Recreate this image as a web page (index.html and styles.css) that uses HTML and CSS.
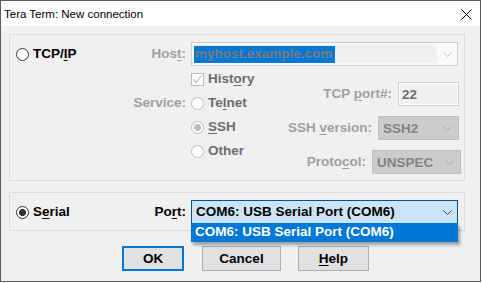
FILE: index.html
```html
<!DOCTYPE html>
<html>
<head>
<meta charset="utf-8">
<link rel="stylesheet" href="styles.css">
</head>
<body>
<div class="window">
  <div class="titlebar">
    <span class="title">Tera Term: New connection</span>
    <svg class="close" width="11" height="11" viewBox="0 0 11 11"><path d="M0.5 0.5 L10.5 10.5 M10.5 0.5 L0.5 10.5" stroke="#000" stroke-width="1" fill="none"/></svg>
  </div>
  <div class="body">
    <div class="group tcp">
      <div class="row">
        <div class="lead">
          <span class="opt"><span class="rb"></span><span>TCP/<u>I</u>P</span></span>
          <span class="lbl dis">Hos<u>t</u>:</span>
        </div>
        <div class="combo host">
          <div class="edit"><span class="sel">myhost.example.com</span></div>
          <span class="arrow"><svg width="9" height="5" viewBox="0 0 9 5"><path d="M0.5 0.5 L4.5 4.5 L8.5 0.5" stroke="#bdbdbd" fill="none"/></svg></span>
        </div>
      </div>
      <div class="lower">
        <div class="opts">
          <span></span>
          <span class="opt sub"><span class="cb"><svg width="11" height="11" viewBox="0 0 11 11"><path d="M1.5 5.5 L4 8.5 L9.5 1.5" stroke="#bcbcbc" stroke-width="1.2" fill="none"/></svg></span><span>Hist<u>o</u>ry</span></span>
          <span class="lbl dis">Service:</span>
          <span class="opt sub"><span class="rb d"></span><span>Te<u>l</u>net</span></span>
          <span></span>
          <span class="opt sub"><span class="rb d on"></span><span><u>S</u>SH</span></span>
          <span></span>
          <span class="opt sub"><span class="rb d"></span><span>Other</span></span>
        </div>
        <div class="fields">
          <div class="frow r6"><span class="lbl dis">TCP <u>p</u>ort#:</span><div class="field port">22</div></div>
          <div class="frow r6"><span class="lbl dis">SSH <u>v</u>ersion:</span><div class="dcombo ver"><span>SSH2</span><svg width="9" height="5" viewBox="0 0 9 5"><path d="M0.5 0.5 L4.5 4.5 L8.5 0.5" stroke="#a6a6a6" fill="none"/></svg></div></div>
          <div class="frow r4"><span class="lbl dis">Proto<u>c</u>ol:</span><div class="dcombo proto"><span>UNSPEC</span><svg width="9" height="5" viewBox="0 0 9 5"><path d="M0.5 0.5 L4.5 4.5 L8.5 0.5" stroke="#a6a6a6" fill="none"/></svg></div></div>
        </div>
      </div>
    </div>
    <div class="group serial">
      <div class="row">
        <div class="lead">
          <span class="opt"><span class="rb on"></span><span>S<u>e</u>rial</span></span>
          <span class="lbl">Po<u>r</u>t:</span>
        </div>
        <div class="combo portsel">
          <span class="val">COM6: USB Serial Port (COM6)</span>
          <span class="arrow"><svg width="9" height="5" viewBox="0 0 9 5"><path d="M0.5 0.5 L4.5 4.5 L8.5 0.5" stroke="#404040" fill="none"/></svg></span>
          <div class="dropdown">COM6: USB Serial Port (COM6)</div>
        </div>
      </div>
    </div>
    <div class="buttons">
      <button class="btn ok">OK</button>
      <button class="btn cancel">Cancel</button>
      <button class="btn help"><u>H</u>elp</button>
    </div>
  </div>
</div>
</body>
</html>
```
FILE: styles.css
```css
* { box-sizing: border-box; }
html, body { margin: 0; padding: 0; background: #ffffff; }
body { font-family: "Liberation Sans", Arial, sans-serif; font-weight: bold; font-size: 13.5px; color: #000; }
u { text-decoration: underline; text-underline-offset: 2px; text-decoration-thickness: 1px; }

.window {
  width: 481px; height: 282px;
  border: 1px solid #5c5c5c;
  display: flex; flex-direction: column;
  background: #f0f0f0;
}
.titlebar {
  height: 25px; background: #fff;
  display: flex; align-items: flex-start; justify-content: space-between;
  flex: none;
}
.title {
  font-weight: normal; font-size: 11.5px; line-height: 14px;
  margin-left: 3px; margin-top: 6px;
}
.close { margin-top: 8px; margin-right: 8px; }

.body { flex: 1; padding: 8px 0 0 8px; display: flex; flex-direction: column; }

.group { width: 456px; border: 1px solid #dcdcdc; flex: none; }
.tcp { height: 147px; }
.serial { height: 39px; margin-top: 11px; }

.row { display: flex; margin-top: 7px; height: 24px; }
.lead { width: 181px; display: flex; align-items: center; justify-content: space-between; padding-left: 6px; padding-right: 5px; }
.lbl { line-height: 16px; }
.dis { color: #a0a0a0; }

.opt { display: flex; align-items: center; gap: 4px; line-height: 16px; }
.opt.sub { color: #6d6d6d; }
.rb { width: 13px; height: 13px; border-radius: 50%; border: 1px solid #333; background: #fff; flex: none; }
.rb.on { background: radial-gradient(circle, #333 0 3.3px, #fff 3.8px); }
.rb.d { border-color: #bcbcbc; }
.rb.d.on { background: radial-gradient(circle, #bcbcbc 0 3.3px, #fff 3.8px); }
.cb { width: 13px; height: 13px; border: 1px solid #bcbcbc; background: #fff; flex: none; display: flex; align-items: center; justify-content: center; }

.combo { width: 267px; height: 24px; display: flex; align-items: stretch; position: relative; }
.combo .arrow { width: 20px; display: flex; align-items: center; justify-content: center; margin-left: auto; }
.host { border: 1px solid #cccccc; background: #fafafa; padding: 2px 0 2px 2px; }
.host .edit { flex: 1; background: #f0f0f0; display: flex; align-items: center; }
.sel { background: #0078d7; color: #7b7b7b; line-height: 16px; padding: 0 3px 0 1px; height: 17px; }
.host .arrow { width: 20px; }

.lower { display: flex; justify-content: space-between; }
.opts { display: grid; grid-template-columns: 181px auto; grid-auto-rows: 24px; align-items: center; margin-top: 1px; }
.opts > .lbl { justify-self: end; padding-right: 5px; }
.fields { display: flex; flex-direction: column; align-items: flex-end; gap: 10px; margin-top: 16px; }
.frow { display: flex; align-items: center; gap: 6px; height: 24px; }
.r6 { margin-right: 5px; }
.r4 { margin-right: 3px; }
.field { height: 24px; border: 1px solid #cccccc; box-shadow: inset 0 0 0 1px #fff; background: #f0f0f0; color: #6d6d6d; display: flex; align-items: center; padding-left: 3px; }
.port { width: 61px; }
.dcombo { height: 24px; border: 1px solid #bfbfbf; background: #cccccc; color: #838383; display: flex; align-items: center; justify-content: space-between; padding: 0 6px 0 4px; }
.ver { width: 81px; }
.proto { width: 89px; }

.portsel { background: #cce4f7; border: 1px solid #005499; }
.portsel .val { display: flex; align-items: center; padding-left: 4px; line-height: 16px; }
.dropdown {
  position: absolute; left: -1px; top: 22px; width: 267px; height: 19px;
  background: #0078d7; color: #fff; line-height: 18px; padding-left: 4px;
  box-shadow: 2px 3px 3px rgba(0,0,0,0.35);
  z-index: 2;
}

.buttons { display: flex; margin-top: 15px; padding-left: 113px; }
.btn {
  font: inherit; height: 25px; background: #e1e1e1; border: 1px solid #adadad; color: #000;
  padding: 0; margin: 0; display: flex; align-items: center; justify-content: center;
}
.ok { width: 62px; border: 2px solid #0078d7; }
.cancel { width: 79px; margin-left: 18px; }
.help { width: 71px; margin-left: 17px; }
```
